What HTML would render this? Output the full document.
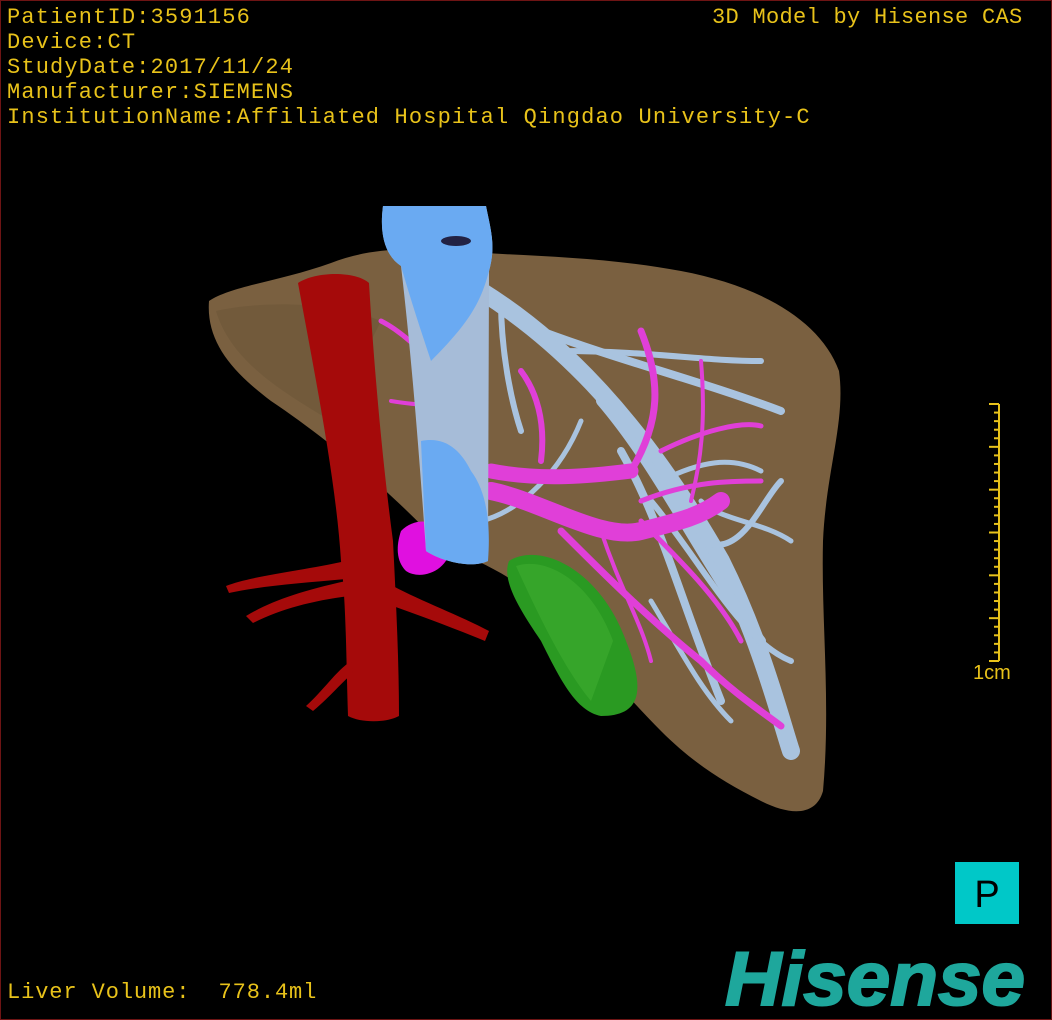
<!DOCTYPE html>
<html><head><meta charset="utf-8"><style>
html,body{margin:0;padding:0;background:#000;}
#c{position:relative;width:1050px;height:1018px;border:1px solid #6e1414;overflow:hidden;background:#000;font-family:"Liberation Mono","DejaVu Sans Mono",monospace;}
.t{position:absolute;color:#e8c21a;font-size:22px;line-height:25px;white-space:pre;letter-spacing:1.15px;}
</style></head><body><div id="c">
<svg width="1050" height="1018" style="position:absolute;left:0;top:0">
<path d="M208,300 C230,285 280,280 330,262 C360,250 400,245 450,250 C520,255 600,255 680,270 C760,285 820,320 838,370 C845,420 825,470 822,540 C820,620 830,700 822,790 C815,815 790,815 760,800 C720,780 690,760 660,730 C620,690 580,640 540,600 C510,575 480,560 440,545 C400,500 330,440 270,400 C230,370 205,340 208,300 Z" fill="#7a6040"/>
<path d="M215,310 C260,300 330,300 380,320 L330,420 C280,390 230,360 215,310Z" fill="#6c5639" opacity="0.6"/>
<path d="M508,560 C540,540 600,570 625,640 C645,690 640,715 600,715 C575,710 560,680 540,640 C520,610 500,580 508,560Z" fill="#2a9a22"/>
<path d="M515,565 C545,555 590,580 612,640 L590,700 C565,670 540,620 515,565Z" fill="#3fae30" opacity="0.6"/>
<g stroke="#a9c3df" fill="none" stroke-linecap="round">
<path d="M480,290 C560,340 640,420 720,560 C760,640 780,720 790,750" stroke-width="18"/>
<path d="M600,400 C660,470 700,560 760,640" stroke-width="10"/>
<path d="M540,330 C620,360 700,380 780,410" stroke-width="8"/>
<path d="M560,350 C650,350 700,360 760,360" stroke-width="6"/>
<path d="M620,450 C660,520 680,600 720,700" stroke-width="8"/>
<path d="M650,500 C700,560 740,640 790,660" stroke-width="6"/>
<path d="M700,540 C740,560 760,500 780,480" stroke-width="6"/>
<path d="M660,480 C700,460 730,455 760,470" stroke-width="5"/>
<path d="M580,420 C560,470 520,510 480,520" stroke-width="5"/>
<path d="M650,600 C680,650 700,690 730,720" stroke-width="5"/>
<path d="M500,300 C500,350 510,400 520,430" stroke-width="6"/>
<path d="M700,500 C720,520 760,520 790,540" stroke-width="5"/>
</g>
<g stroke="#e03fd8" fill="none" stroke-linecap="round">
<path d="M490,490 C540,500 600,540 640,530 C680,520 700,515 720,500" stroke-width="18"/>
<path d="M490,470 C540,480 590,475 630,470" stroke-width="15"/>
<path d="M560,530 C600,570 650,620 700,660 C730,690 760,710 780,725" stroke-width="7"/>
<path d="M630,470 C660,420 660,380 640,330" stroke-width="7"/>
<path d="M660,450 C700,430 740,420 760,425" stroke-width="5"/>
<path d="M540,460 C545,420 535,390 520,370" stroke-width="6"/>
<path d="M640,520 C680,560 720,600 740,640" stroke-width="5"/>
<path d="M640,500 C690,480 730,480 760,480" stroke-width="5"/>
<path d="M600,530 C620,590 640,620 650,660" stroke-width="4"/>
<path d="M380,320 C400,330 420,350 430,360" stroke-width="5"/>
<path d="M390,400 C420,405 440,405 460,400" stroke-width="4"/>
<path d="M700,360 C705,420 700,460 690,500" stroke-width="4"/>
</g>
<path d="M400,530 C420,510 450,525 450,545 C448,570 420,580 405,570 C395,560 395,545 400,530Z" fill="#e010e0"/>
<path d="M382,205 L485,205 C490,230 495,245 488,270 L487,560 C470,568 440,560 425,550 C418,450 410,350 400,265 C385,255 378,235 382,205Z" fill="#a6bcd8"/>
<path d="M382,205 L485,205 C490,230 495,245 488,270 C480,300 470,320 430,360 C420,330 410,300 400,265 C385,255 378,235 382,205Z" fill="#6aaaf2"/>
<path d="M420,440 C445,435 460,450 470,470 C485,490 490,520 487,560 C470,568 440,560 425,550 Z" fill="#6aaaf2"/>
<ellipse cx="455" cy="240" rx="15" ry="5" fill="#224"/>
<g fill="#a50a0a">
<path d="M297,282 C315,270 355,270 368,282 C372,350 380,450 392,540 C395,600 398,660 398,715 C385,722 360,722 347,715 C345,650 345,600 340,560 C335,480 315,380 297,282Z"/>
<path d="M345,560 C300,570 250,575 225,585 L228,592 C260,585 300,582 345,578Z"/>
<path d="M345,580 C300,590 270,600 245,615 L252,622 C280,608 310,600 348,595Z"/>
<path d="M392,585 C420,600 460,615 488,630 L484,640 C455,628 420,615 392,605Z"/>
<path d="M350,660 C335,670 322,690 305,705 L312,710 C330,695 342,680 352,672Z"/>
</g>
<g stroke="#e8c21a" stroke-width="2">
<line x1="998" y1="403" x2="998" y2="660"/>
</g>
<g id="ticks" stroke="#e8c21a" stroke-width="2"></g>
<rect x="954" y="861" width="64" height="62" fill="#00c8c8"/>
<text x="986" y="906" font-family="Liberation Sans,sans-serif" font-size="38" fill="#000" text-anchor="middle">P</text>
<text x="1024" y="1004" font-family="Liberation Sans,sans-serif" font-size="76" font-weight="bold" font-style="italic" fill="#1ea79c" stroke="#1ea79c" stroke-width="2" text-anchor="end" textLength="300" lengthAdjust="spacingAndGlyphs">Hisense</text>
<text x="972" y="678" font-family="Liberation Sans,sans-serif" font-size="20" fill="#e8c21a">1cm</text>
</svg>
<div class="t" style="left:6px;top:4px">PatientID:3591156
Device:CT
StudyDate:2017/11/24
Manufacturer:SIEMENS
InstitutionName:Affiliated Hospital Qingdao University-C</div>
<div class="t" style="left:711px;top:4px;letter-spacing:0.3px">3D Model by Hisense CAS</div>
<div class="t" style="left:6px;top:979px;letter-spacing:0.9px">Liver Volume:  778.4ml</div>
</div>
<script>
var g=document.getElementById('ticks'),s='';
for(var i=0;i<=30;i++){var y=403+i*257/30;var l=(i%5==0)?10:5;s+='<line x1="'+(998-l)+'" y1="'+y+'" x2="998" y2="'+y+'"/>';}
g.innerHTML=s;
</script>
</body></html>
